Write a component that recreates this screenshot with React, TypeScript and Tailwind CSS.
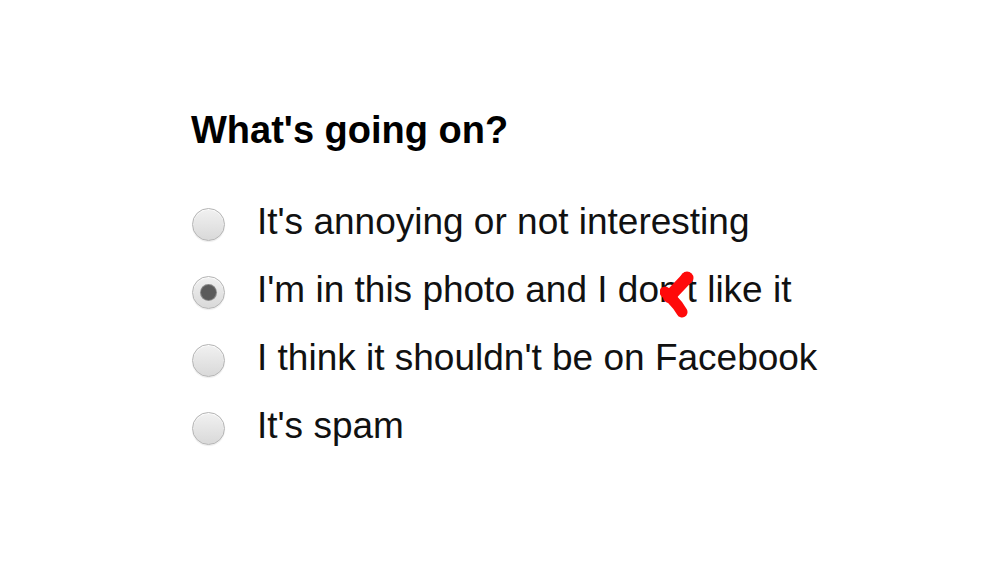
import React from 'react';

const options = [
  "It's annoying or not interesting",
  "I'm in this photo and I don't like it",
  "I think it shouldn't be on Facebook",
  "It's spam",
];

const Radio = ({ checked }: { checked: boolean }) => (
  <div className="ml-[1px] mt-[6px] w-[33px] h-[33px] shrink-0 rounded-full border border-[#b4b4b4] bg-gradient-to-b from-[#f1f1f1] to-[#d9d9d9] shadow-[inset_0_1px_1px_rgba(255,255,255,0.9),0_1px_1px_rgba(0,0,0,0.08)] flex items-center justify-center">
    {checked && (
      <div className="w-[15px] h-[15px] rounded-full bg-[#5b5b5b] shadow-[0_0_0_1px_#8a8a8a]" />
    )}
  </div>
);

export default function App() {
  return (
    <div
      className="relative w-[1000px] h-[563px] bg-white overflow-hidden pl-[191px] pt-[109px] text-[#111]"
      style={{ fontFamily: '"Liberation Sans", Arial, sans-serif' }}
    >
      <h1 className="text-[38px] leading-[42px] font-bold text-black">What's going on?</h1>

      <div className="mt-[36px] flex flex-col">
        {options.map((label, i) => (
          <div key={label} className="h-[68px] flex items-center gap-[32px]">
            <Radio checked={i === 1} />
            <span className="text-[37px] leading-[41px] whitespace-nowrap">{label}</span>
          </div>
        ))}
      </div>

      {/* red scribble over "n't" */}
      <svg className="absolute left-[660px] top-[270px]" width="36" height="50" viewBox="0 0 36 50">
        <circle cx="27" cy="8" r="6.5" fill="#ff0a0a" />
        <path d="M27 8 L9 27" stroke="#ff0a0a" strokeWidth="12" strokeLinecap="round" fill="none" />
        <path d="M5 22 L12 29 Q18 35 22 42" stroke="#ff0a0a" strokeWidth="11" strokeLinecap="round" strokeLinejoin="round" fill="none" />
      </svg>
    </div>
  );
}
